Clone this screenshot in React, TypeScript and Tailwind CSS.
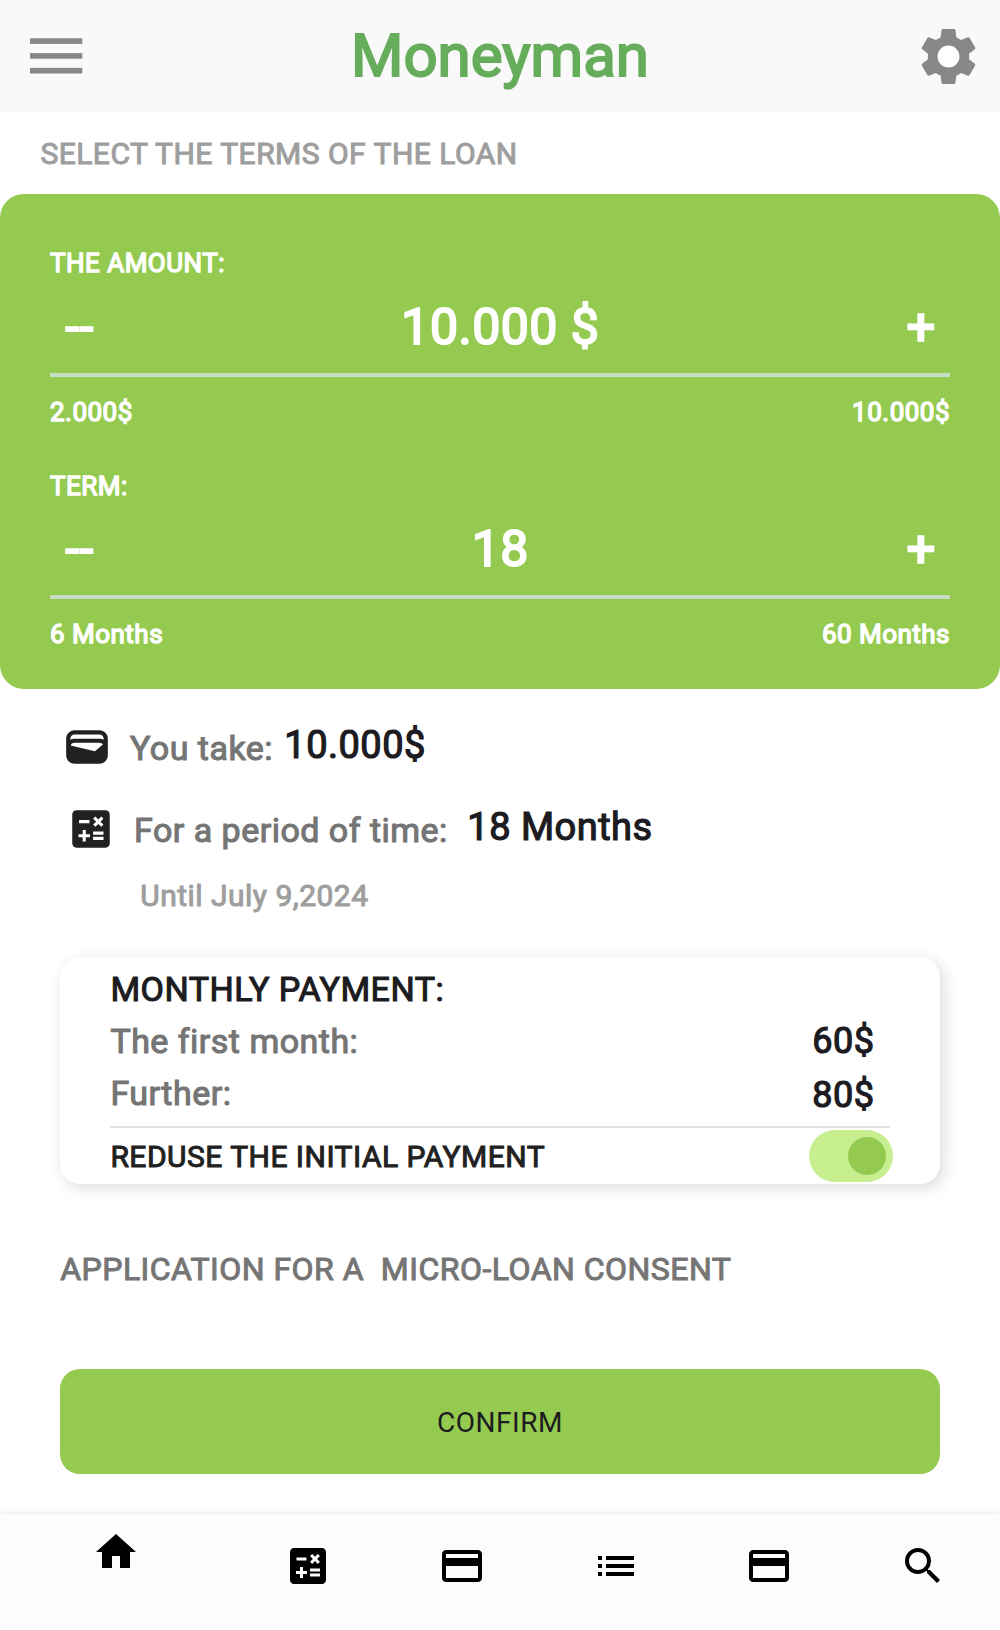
import React from "react";
import { MdCalculate, MdCreditCard, MdList, MdSearch } from "react-icons/md";

function MenuIcon() {
  return (
    <svg width="53" height="36" viewBox="0 0 53 36" fill="#888888">
      <rect x="0" y="0.3" width="52.3" height="5.6" />
      <rect x="0" y="15.1" width="52.3" height="5.6" />
      <rect x="0" y="29.9" width="52.3" height="5.6" />
    </svg>
  );
}

function SettingsIcon() {
  return (
    <svg width="69" height="69" viewBox="0 0 24 24">
      <path
        fill="#888888"
        d="M19.14 12.94c.04-.3.06-.61.06-.94 0-.32-.02-.64-.07-.94l2.03-1.58c.18-.14.23-.41.12-.61l-1.92-3.32c-.12-.22-.37-.29-.59-.22l-2.39.96c-.5-.38-1.03-.7-1.62-.94l-.36-2.54c-.04-.24-.24-.41-.48-.41h-3.84c-.24 0-.43.17-.47.41l-.36 2.54c-.59.24-1.13.57-1.62.94l-2.39-.96c-.22-.08-.47 0-.59.22L2.74 8.87c-.12.21-.08.47.12.61l2.03 1.58c-.05.3-.09.63-.09.94s.02.64.07.94l-2.03 1.58c-.18.14-.23.41-.12.61l1.92 3.32c.12.22.37.29.59.22l2.39-.96c.5.38 1.03.7 1.62.94l.36 2.54c.05.24.24.41.48.41h3.84c.24 0 .44-.17.47-.41l.36-2.54c.59-.24 1.13-.56 1.62-.94l2.39.96c.22.08.47 0 .59-.22l1.92-3.32c.12-.22.07-.47-.12-.61l-2.01-1.58z"
      />
      <circle cx="12" cy="12" r="3.8" fill="#ffffff" />
    </svg>
  );
}

function WalletIcon() {
  return (
    <svg width="50" height="50" viewBox="0 0 24 24" fill="#212121" className="shrink-0">
      <path d="M18 4H6C3.79 4 2 5.79 2 8v8c0 2.21 1.79 4 4 4h12c2.21 0 4-1.79 4-4V8c0-2.21-1.79-4-4-4zm-1.86 9.77c-.24.2-.57.28-.88.2L4.15 11.25C4.45 10.52 5.16 10 6 10h12c.67 0 1.26.34 1.63.84l-3.49 2.93zM6 6h12c1.1 0 2 .9 2 2v.55c-.59-.34-1.27-.55-2-.55H6c-.73 0-1.41.21-2 .55V8c0-1.1.9-2 2-2z" />
    </svg>
  );
}

function HomeIcon() {
  return (
    <svg width="48" height="48" viewBox="0 0 24 24" fill="#000000">
      <path d="M10 20v-6h4v6h5v-8h3L12 3 2 12h3v8z" />
    </svg>
  );
}

type StepperProps = { label: string; value: string; min: string; max: string };

function Stepper({ label, value, min, max }: StepperProps) {
  return (
    <div className="h-[222.2px] text-white">
      <div className="h-[30px] text-[26px] leading-[30px] [-webkit-text-stroke:1.4px]">{label}</div>
      <div className="mt-[18.6px] flex h-[60px] justify-between pr-[14.4px] pl-[15.3px] text-[50px] leading-[60px] [-webkit-text-stroke:2px]">
        <button>--</button>
        <span>{value}</span>
        <button className="[-webkit-text-stroke:2.4px]">+</button>
      </div>
      <div className="mt-[15.6px] h-1 bg-[#c7dcc4]" />
      <div className="mt-[20px] flex h-[30px] justify-between text-[26px] leading-[30px] [-webkit-text-stroke:1.4px]">
        <span>{min}</span>
        <span>{max}</span>
      </div>
    </div>
  );
}

export default function App() {
  return (
    <div
      className="flex h-[1630px] w-[1000px] flex-col overflow-hidden bg-white tracking-[0.48px]"
      style={{ fontFamily: "Roboto, sans-serif" }}
    >
      <header className="flex h-28 shrink-0 items-center justify-between bg-[#f9f9f9] pr-[16.8px] pl-[30px]">
        <div className="w-[55.8px]">
          <MenuIcon />
        </div>
        <h1 className="text-[60px] leading-[70px] tracking-normal text-[#66ad5b] [-webkit-text-stroke:2px]">
          Moneyman
        </h1>
        <SettingsIcon />
      </header>

      <h2 className="mt-[22px] h-10 shrink-0 pl-[40.4px] text-[30px] leading-10 text-[#9e9e9e] [-webkit-text-stroke:1px]">
        SELECT THE TERMS OF THE LOAN
      </h2>

      <section className="mt-[20.3px] h-[494.8px] shrink-0 rounded-[24px] bg-[#94ca50] px-[50px] pt-[54.1px]">
        <Stepper label="THE AMOUNT:" value="10.000 $" min="2.000$" max="10.000$" />
        <Stepper label="TERM:" value="18" min="6 Months" max="60 Months" />
      </section>

      <section className="mt-[32.5px] h-[235px] shrink-0">
        <div className="flex h-[82.4px] items-start pl-[62px]">
          <WalletIcon />
          <span className="mt-[6px] ml-[18px] text-[34px] leading-10 text-[#757575] [-webkit-text-stroke:1.1px]">
            You take:
          </span>
          <span className="mt-[1.4px] ml-[11.3px] text-[38px] leading-[44px] text-[#1c1b1f] [-webkit-text-stroke:1.2px]">
            10.000$
          </span>
        </div>
        <div className="flex h-[71.6px] items-start pl-[66px]">
          <MdCalculate size={50} color="#212121" className="shrink-0" />
          <span className="mt-[6.4px] ml-[18px] text-[34px] leading-10 text-[#757575] [-webkit-text-stroke:1.1px]">
            For a period of time:
          </span>
          <span className="mt-[1px] ml-[19.5px] text-[38px] leading-[44px] text-[#1c1b1f] [-webkit-text-stroke:1.2px]">
            18 Months
          </span>
        </div>
        <p className="pl-[140.3px] text-[30px] leading-10 text-[#9e9e9e] [-webkit-text-stroke:1px]">
          Until July 9,2024
        </p>
      </section>

      <section className="mx-[60px] h-[227.4px] shrink-0 rounded-[20px] bg-white px-[50px] pt-[12.4px] text-[34px] leading-10 shadow-[4px_4px_16px_rgba(0,0,0,0.14)]">
        <h3 className="h-[52px] pl-[0.4px] text-[#1c1b1f] [-webkit-text-stroke:1.1px]">MONTHLY PAYMENT:</h3>
        <div className="flex h-[107.2px] justify-between border-b-2 border-[#e0e0e0]">
          <div className="pl-[0.4px] text-[#757575] [-webkit-text-stroke:1.1px]">
            <p className="h-[52px]">The first month:</p>
            <p>Further:</p>
          </div>
          <div className="mr-[15.5px] text-right text-[36px] text-[#1c1b1f] [-webkit-text-stroke:1.2px]">
            <p className="h-[54px]">60$</p>
            <p>80$</p>
          </div>
        </div>
        <div className="-mr-[2.8px] flex justify-between pt-[2.2px]">
          <span className="mt-[6.5px] pl-[0.4px] text-[30px] text-[#212121] [-webkit-text-stroke:1px]">
            REDUSE THE INITIAL PAYMENT
          </span>
          <button className="flex h-[51.2px] w-[83.4px] items-center justify-end rounded-full bg-[#c7ef90] pr-[6.4px]">
            <span className="size-[38.4px] rounded-full bg-[#94ca50]" />
          </button>
        </div>
      </section>

      <p className="mt-[65px] h-10 shrink-0 pl-[60.2px] text-[32px] leading-10 whitespace-pre text-[#757575] [-webkit-text-stroke:1px]">
        {"APPLICATION FOR A  MICRO-LOAN CONSENT"}
      </p>

      <button className="mx-[60px] mt-20 h-[105px] shrink-0 rounded-[20px] bg-[#94ca50] pt-[3px] text-[28px] leading-10 tracking-[0.5px] text-[#1c1b1f]">
        CONFIRM
      </button>

      <nav className="mt-10 flex h-[116px] shrink-0 bg-[#fefbff] text-black shadow-[0_-1px_5px_rgba(0,0,0,0.1)]">
        <div className="flex flex-[1.5] justify-center pt-[14px] pl-[0.6px]">
          <HomeIcon />
        </div>
        {[MdCalculate, MdCreditCard, MdList, MdCreditCard, MdSearch].map((Icon, i) => (
          <div key={i} className="flex flex-1 justify-center pt-[28px]">
            <Icon size={48} />
          </div>
        ))}
      </nav>
    </div>
  );
}
